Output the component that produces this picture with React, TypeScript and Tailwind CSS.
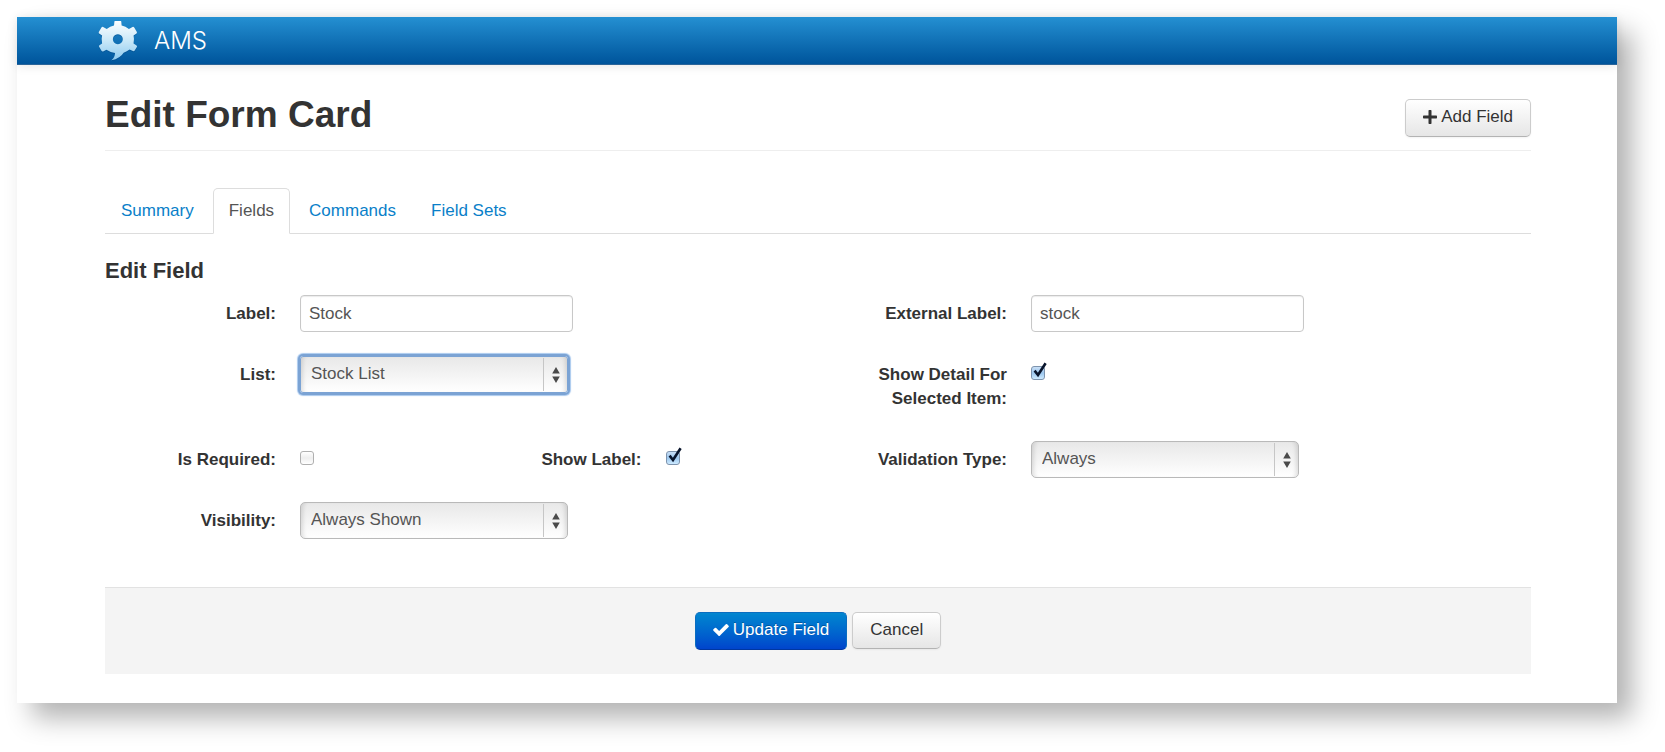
import { useState } from "react";
import type { ReactNode } from "react";

const tabs = ["Summary", "Fields", "Commands", "Field Sets"];

const gearPath =
  "M342 64Q342 62 344 62H361Q363 62 363 64L364 76Q376 78 386 86L397 80Q400 79 402 82L410 95Q411 98 409 100L400 106Q403 117 400 130L409 136Q412 138 410 141L403 152Q401 154 398 153L388 148Q380 154 370 158Q360 175 333 181Q344 172 344 159Q330 157 318 149L308 154Q305 155 303 152L296 140Q294 137 297 135L305 130Q302 117 305 106L296 100Q294 98 295 95L303 82Q305 79 308 80L319 86Q329 78 341 76ZM352 102a15 15 0 1 0 1 0z";

function Logo() {
  return (
    <svg viewBox="290 56 126 130" className="h-[43px] w-[42px]" aria-hidden="true">
      <defs>
        <linearGradient id="gear" x1="0" y1="0" x2="0" y2="1">
          <stop offset="0" stopColor="#ffffff" />
          <stop offset="0.5" stopColor="#c9e8f8" />
          <stop offset="1" stopColor="#8cc9ee" />
        </linearGradient>
      </defs>
      <path d={gearPath} fill="#003f7a" fillOpacity="0.35" fillRule="evenodd" transform="translate(0 3)" />
      <path d={gearPath} fill="url(#gear)" fillRule="evenodd" />
    </svg>
  );
}

function PlusIcon() {
  return (
    <svg viewBox="0 0 14 14" className="size-[14px]" fill="currentColor" aria-hidden="true">
      <rect x="0" y="5.500" width="14" height="3" rx="0.7" />
      <rect x="5.500" y="0" width="3" height="14" rx="0.7" />
    </svg>
  );
}

function CheckIcon() {
  return (
    <svg viewBox="121 334 1550 1188" className="h-3 w-4" fill="currentColor" aria-hidden="true">
      <path d="M1671 566q0 40-28 68l-724 724-136 136q-28 28-68 28t-68-28l-136-136-362-362q-28-28-28-68t28-68l136-136q28-28 68-28t68 28l294 295 656-657q28-28 68-28t68 28l136 136q28 28 28 68z" />
    </svg>
  );
}

function Field({ id, label, children }: { id: string; label: string; children: ReactNode }) {
  return (
    <div className="flex gap-6">
      <label htmlFor={id} className="w-[171px] shrink-0 pt-[7px] pb-1.5 pl-8 text-right font-bold">
        {label}
      </label>
      {children}
    </div>
  );
}

function TextInput({ id, initial }: { id: string; initial: string }) {
  return (
    <input
      id={id}
      type="text"
      defaultValue={initial}
      className="h-[37px] w-[273px] rounded-[4px] border border-[#c8c8c8] bg-white px-2 text-[#555] shadow-[inset_0_1px_1px_rgba(0,0,0,0.08)] outline-none"
    />
  );
}

function Select({ id, options, focused = false }: { id: string; options: string[]; focused?: boolean }) {
  return (
    <div className="relative h-[37px] w-[268px]">
      <select
        id={id}
        className={`size-full appearance-none border bg-linear-to-b from-[#e8e8e8] to-white pr-8 pb-0.5 pl-2.5 text-[#555] outline-none ${
          focused
            ? "rounded-[3px] border-[#7ba3d4] shadow-[inset_5px_0_4px_-3px_rgba(0,0,0,0.12),inset_-5px_0_4px_-3px_rgba(0,0,0,0.12),0_0_0_2px_#7ba3d4,0_0_1px_3px_#a9c9ee]"
            : "rounded-[5px] border-[#b9b9b9] shadow-[inset_5px_0_4px_-3px_rgba(0,0,0,0.12),inset_-5px_0_4px_-3px_rgba(0,0,0,0.12)]"
        }`}
      >
        {options.map((option) => (
          <option key={option}>{option}</option>
        ))}
      </select>
      <span className="pointer-events-none absolute inset-y-0.5 right-0 flex w-[25px] items-center border-l border-[#c6c6c6] pl-2">
        <svg viewBox="0 0 8 16" className="h-4 w-2" fill="#4a4a4a" aria-hidden="true">
          <path d="M4 0l3.8 6.5H.2zM4 16l3.8-6.5H.2z" />
        </svg>
      </span>
    </div>
  );
}

function Checkbox({ id, initial = false }: { id: string; initial?: boolean }) {
  return (
    <div className="relative mt-2.5 size-[14px]">
      <input
        id={id}
        type="checkbox"
        defaultChecked={initial}
        className="peer block size-full appearance-none rounded-[3px] border border-[#b0b0b0] bg-linear-to-b from-white via-[#eeeeee] to-white checked:border-[#7d93ad] checked:from-[#c9dff6] checked:via-[#9cc7ee] checked:to-[#cdeaff]"
      />
      <svg
        viewBox="0 0 14 16"
        className="pointer-events-none absolute bottom-0.5 left-0.5 hidden h-4 w-3.5 peer-checked:block"
        fill="none"
        stroke="#08142b"
        strokeWidth="2.6"
        aria-hidden="true"
      >
        <path d="M1.600 8.600L5 13L12.600 1.200" />
      </svg>
    </div>
  );
}

export default function App() {
  const [active, setActive] = useState("Fields");

  return (
    <div className="bg-white pt-[17px] pr-12 pb-12 pl-[17px] font-['Liberation_Sans',Arial,sans-serif] text-[17px] leading-6 text-[#333]">
      <div className="bg-white pb-[29px] shadow-[15px_15px_25px_rgba(0,0,0,0.3)]">
        <header className="flex h-12 items-center gap-[15px] border-b border-[#2a6499] bg-linear-to-b from-[#2490d2] to-[#00549b] pl-20 shadow-[0_1px_10px_rgba(0,0,0,0.1)]">
          <Logo />
          <span className="font-[Inter,sans-serif] text-2xl font-light text-white">AMS</span>
        </header>

        <main className="pr-[86px] pl-[88px]">
          <div className="flex items-start justify-between border-b border-[#eee] pt-[34px] pb-[13px]">
            <h1 className="text-[37px] leading-8 font-bold">Edit Form Card</h1>
            <button
              type="button"
              className="flex h-[38px] items-center gap-1 rounded-[5px] border border-[#ccc] border-b-[#b3b3b3] bg-linear-to-b from-white to-[#e6e6e6] px-[17px] pb-0.5 shadow-[0_1px_2px_rgba(0,0,0,0.05)]"
            >
              <PlusIcon />
              Add Field
            </button>
          </div>

          <nav className="mt-[37px] flex border-b border-[#ddd]">
            {tabs.map((tab) => (
              <a
                key={tab}
                href="#"
                onClick={(e) => {
                  e.preventDefault();
                  setActive(tab);
                }}
                className={`-mb-px mr-[3px] rounded-t-[5px] border px-[15px] py-2.5 ${
                  tab === active ? "border-[#ddd] border-b-white bg-white text-[#555]" : "border-transparent text-[#0a7fc9]"
                }`}
              >
                {tab}
              </a>
            ))}
          </nav>

          <form onSubmit={(e) => e.preventDefault()}>
            <h2 className="mt-[25px] mb-3 text-[22px] leading-6 font-bold">Edit Field</h2>

            <div className="grid grid-cols-2 gap-x-9 gap-y-6">
              <Field id="label" label="Label:">
                <TextInput id="label" initial="Stock" />
              </Field>
              <Field id="external-label" label="External Label:">
                <TextInput id="external-label" initial="stock" />
              </Field>

              <Field id="list" label="List:">
                <Select id="list" options={["Stock List"]} focused />
              </Field>
              <Field id="show-detail" label="Show Detail For Selected Item:">
                <Checkbox id="show-detail" initial />
              </Field>

              <div className="grid grid-cols-2 gap-x-9">
                <Field id="required" label="Is Required:">
                  <Checkbox id="required" />
                </Field>
                <Field id="show-label" label="Show Label:">
                  <Checkbox id="show-label" initial />
                </Field>
              </div>
              <Field id="validation" label="Validation Type:">
                <Select id="validation" options={["Always"]} />
              </Field>

              <Field id="visibility" label="Visibility:">
                <Select id="visibility" options={["Always Shown"]} />
              </Field>
            </div>

            <div className="mt-12 flex justify-center gap-[5px] border-t border-[#e2e2e2] bg-[#f4f4f4] py-6">
              <button
                type="submit"
                className="flex h-[38px] items-center gap-1 rounded-[5px] border border-[#0a6dc0] border-b-[#0037a0] bg-linear-to-b from-[#0486cf] to-[#0044cc] px-[17px] pb-0.5 text-white [text-shadow:0_-1px_0_rgba(0,0,0,0.25)]"
              >
                <CheckIcon />
                Update Field
              </button>
              <button
                type="button"
                className="h-[37px] rounded-[5px] border border-[#ccc] border-b-[#b3b3b3] bg-linear-to-b from-white to-[#e6e6e6] px-[17px] pb-0.5 shadow-[0_1px_2px_rgba(0,0,0,0.05)]"
              >
                Cancel
              </button>
            </div>
          </form>
        </main>
      </div>
    </div>
  );
}
